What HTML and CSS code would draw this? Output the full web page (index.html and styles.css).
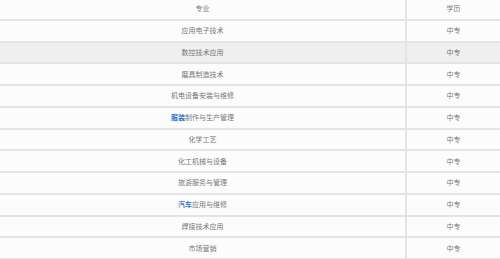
FILE: index.html
```html
<!DOCTYPE html>
<html lang="zh-CN">
<head>
    <meta charset="UTF-8">
    <meta name="viewport" content="width=device-width, initial-scale=1.0">
    <title>专业设置</title>
    <link rel="stylesheet" href="styles.css">
</head>
<body>
    <table class="major-table">
        <tr><td>专业</td><td>学历</td></tr>
        <tr><td>应用电子技术</td><td>中专</td></tr>
        <tr class="hover"><td>数控技术应用</td><td>中专</td></tr>
        <tr><td>磨具制造技术</td><td>中专</td></tr>
        <tr><td>机电设备安装与维修</td><td>中专</td></tr>
        <tr><td><a href="#">服装</a>制作与生产管理</td><td>中专</td></tr>
        <tr><td>化学工艺</td><td>中专</td></tr>
        <tr><td>化工机械与设备</td><td>中专</td></tr>
        <tr><td>旅游服务与管理</td><td>中专</td></tr>
        <tr><td><a href="#">汽车</a>应用与维修</td><td>中专</td></tr>
        <tr><td>焊接技术应用</td><td>中专</td></tr>
        <tr><td>市场营销</td><td>中专</td></tr>
    </table>
</body>
</html>
```

FILE: styles.css
```css
body { margin: 0; background: #fdfcfc; font-family: "Noto Sans CJK SC", "Noto Sans", sans-serif; overflow: hidden; }
.major-table { width: 500px; border-collapse: collapse; margin-top: -1px; }
.major-table td { height: 19.75px; padding: 0; border-bottom: 2px solid #e4e4e4; text-align: center; font-size: 7px; color: #787878; line-height: 1; }
.major-table td:first-child { width: 405px; border-right: 2px solid #e4e4e4; }
.major-table tr.hover td { background: #efefef; }
.major-table a { color: #2f78cc; text-decoration: none; font-weight: bold; }
```
